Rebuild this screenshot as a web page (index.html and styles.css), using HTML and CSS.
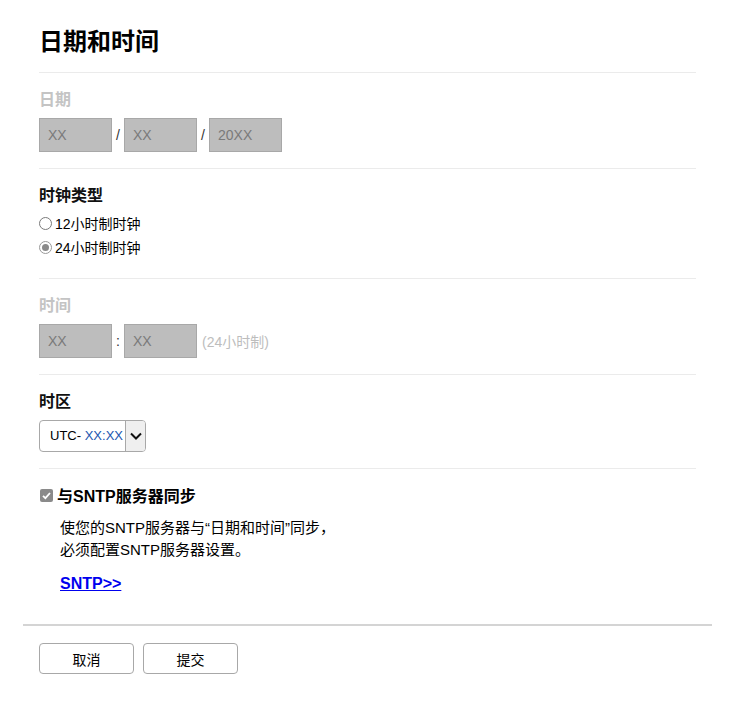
FILE: index.html
```html
<!DOCTYPE html>
<html lang="zh">
<head>
<meta charset="utf-8">
<link rel="stylesheet" href="styles.css">
</head>
<body>
<div class="page">
  <div class="content">
    <h1 class="title">日期和时间</h1>

    <section class="sec">
      <div class="label disabled">日期</div>
      <div class="fields">
        <div class="box">XX</div><span class="sep">/</span>
        <div class="box">XX</div><span class="sep">/</span>
        <div class="box">20XX</div>
      </div>
    </section>

    <section class="sec sec-clock">
      <div class="label">时钟类型</div>
      <div class="radio-row"><span class="radio"></span><span>12小时制时钟</span></div>
      <div class="radio-row"><span class="radio checked"></span><span>24小时制时钟</span></div>
    </section>

    <section class="sec">
      <div class="label disabled">时间</div>
      <div class="fields">
        <div class="box">XX</div><span class="sep">:</span>
        <div class="box">XX</div>
        <span class="hint">(24小时制)</span>
      </div>
    </section>

    <section class="sec">
      <div class="label">时区</div>
      <div class="select">
        <span class="select-text">UTC- <span class="blue">XX:XX</span></span>
        <span class="select-btn">
          <svg width="12" height="8" viewBox="0 0 12 8"><path d="M1 1.5 L6 6.5 L11 1.5" fill="none" stroke="#111" stroke-width="2"/></svg>
        </span>
      </div>
    </section>

    <section class="sec sec-sntp">
      <div class="check-row">
        <span class="checkbox"><svg width="13" height="13" viewBox="0 0 13 13"><path d="M3 6.8 L5.4 9.2 L10 4" fill="none" stroke="#fff" stroke-width="1.8"/></svg></span>
        <span>与SNTP服务器同步</span>
      </div>
      <p class="desc">使您的SNTP服务器与“日期和时间”同步，<br>必须配置SNTP服务器设置。</p>
      <a class="link" href="#">SNTP&gt;&gt;</a>
    </section>
  </div>

  <div class="footer">
    <button class="btn">取消</button>
    <button class="btn">提交</button>
  </div>
</div>
</body>
</html>
```

FILE: styles.css
```css
html, body {
  margin: 0;
  padding: 0;
  background: #fff;
}
body {
  font-family: "Liberation Sans", Arial, "Noto Sans CJK SC", sans-serif;
  color: #000;
}
.page {
  margin-left: 23px;
  width: 689px;
}
.content {
  padding: 0 16px;
}
.title {
  margin: 0;
  padding-top: 27px;
  padding-bottom: 16px;
  font-size: 24px;
  line-height: 29px;
  font-weight: bold;
  border-bottom: 1px solid #ebebeb;
}
.sec {
  padding: 17px 0 16px;
  border-bottom: 1px solid #ebebeb;
}
.label {
  font-size: 16px;
  line-height: 20px;
  font-weight: bold;
  color: #111;
  margin-bottom: 8px;
}
.label.disabled {
  color: #c4c4c4;
}
.fields {
  display: flex;
  align-items: center;
}
.box {
  box-sizing: border-box;
  width: 73px;
  height: 34px;
  background: #bdbdbd;
  border: 1px solid #a8a8a8;
  color: #7a7a7a;
  font-size: 14px;
  line-height: 32px;
  padding-left: 8px;
}
.sep {
  width: 12px;
  text-align: center;
  font-size: 14px;
  color: #333;
}
.hint {
  margin-left: 5px;
  font-size: 14px;
  color: #bdbdbd;
}
.sec-clock {
  padding-bottom: 19px;
}
.sec-clock .label {
  margin-bottom: 5px;
}
.radio-row {
  display: flex;
  align-items: center;
  height: 24px;
  font-size: 14px;
}
.radio {
  box-sizing: border-box;
  width: 13px;
  height: 13px;
  margin: 0 3px 0 0;
  border: 1px solid #7a7a7a;
  border-radius: 50%;
  background: #fff;
  position: relative;
}
.radio.checked {
  border-color: #9a9a9a;
}
.radio.checked::after {
  content: "";
  position: absolute;
  left: 2px;
  top: 2px;
  width: 7px;
  height: 7px;
  border-radius: 50%;
  background: #8a8a8a;
}
.select {
  box-sizing: border-box;
  width: 107px;
  height: 32px;
  border: 1px solid #a8a8a8;
  border-radius: 4px;
  display: flex;
  align-items: stretch;
  overflow: hidden;
}
.select-text {
  flex: 1;
  font-size: 13px;
  line-height: 30px;
  padding-left: 10px;
  white-space: nowrap;
}
.blue {
  color: #2256b0;
}
.select-btn {
  width: 19px;
  background: #efefef;
  border-left: 1px solid #a8a8a8;
  display: flex;
  align-items: center;
  justify-content: center;
}
.sec-sntp {
  border-bottom: none;
  padding-top: 16px;
  padding-bottom: 30px;
}
.check-row {
  display: flex;
  align-items: center;
  height: 20px;
  font-size: 16px;
  font-weight: bold;
}
.checkbox {
  box-sizing: border-box;
  width: 13px;
  height: 13px;
  margin: 0 4px 0 1px;
  border-radius: 2px;
  background: #8a8a8a;
  display: flex;
}
.desc {
  margin: 12px 0 0 21px;
  font-size: 15px;
  line-height: 22px;
}
.link {
  display: inline-block;
  margin: 13px 0 0 21px;
  font-size: 16px;
  line-height: 20px;
  font-weight: bold;
  color: #0000ee;
}
.footer {
  border-top: 2px solid #d4d4d4;
  padding: 17px 16px 0;
  display: flex;
  gap: 9px;
}
.btn {
  box-sizing: border-box;
  width: 95px;
  height: 31px;
  background: #fff;
  border: 1px solid #a8a8a8;
  border-radius: 4px;
  font-family: inherit;
  font-size: 14px;
  color: #000;
}
```
